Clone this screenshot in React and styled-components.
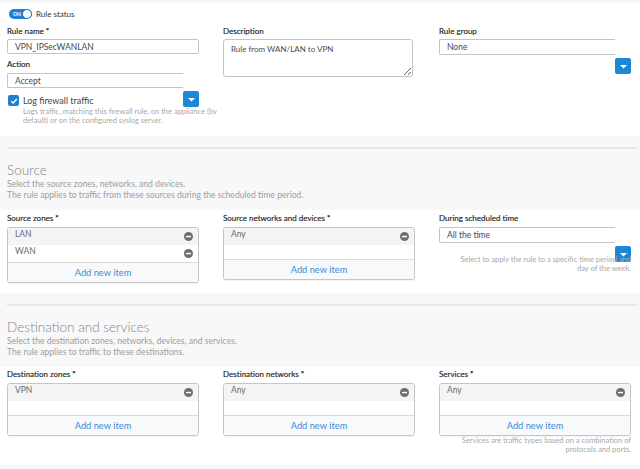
import React from 'react';
import styled, { createGlobalStyle } from 'styled-components';

const GlobalStyle = createGlobalStyle`
  html, body {
    margin: 0;
    padding: 0;
    background: #f7f7f7;
    font-family: Lato, 'Liberation Sans', sans-serif;
    color: #444;
  }
  * { box-sizing: border-box; }
`;

const Page = styled.div`
  width: 640px;
  padding-top: 3px;
`;

const Panel = styled.section`
  background: #fff;
  padding: ${p => p.$pt}px 0 ${p => p.$pb}px;
`;

const SectionHead = styled.header`
  background: #f8f8f8;
  padding: 11px 3px 9px 0;
`;

const Rule = styled.hr`
  margin: 0 0 13px 7px;
  border: 0;
  border-top: 2px solid #e8e8e8;
`;

const Heading = styled.h2`
  margin: 0;
  padding-left: 7px;
  font-size: 13.5px;
  line-height: 17px;
  font-weight: 300;
  color: #858585;
`;

const Intro = styled.p`
  margin: 0;
  padding-left: 7px;
  font-size: 8.6px;
  line-height: 11px;
  color: #9d9d9d;
`;

const StatusRow = styled.div`
  display: flex;
  align-items: center;
  gap: 4px;
  height: 10px;
  padding-left: 9px;
  font-size: 8px;
  color: #333;
`;

const Toggle = styled.span`
  display: flex;
  align-items: center;
  justify-content: space-between;
  width: 23px;
  height: 10px;
  border-radius: 5px;
  background: #1d7fd2;
  padding-left: 4px;
  color: #fff;
  font-size: 5px;
  font-weight: 700;
`;

const Knob = styled.span`
  width: 10px;
  height: 10px;
  border-radius: 50%;
  background: #fff;
  border: 1px solid #1d7fd2;
`;

const FieldGrid = styled.div`
  display: grid;
  grid-template-columns: repeat(3, 192px);
  column-gap: 24px;
  padding-left: 7px;
  margin-top: ${p => p.$mt || 0}px;
`;

const Field = styled.div`
  display: flex;
  flex-direction: column;
`;

const Label = styled.label`
  display: block;
  margin: ${p => p.$mt || 0}px 0 ${p => p.$mb || 3}px;
  font-size: 8px;
  line-height: 10px;
  font-weight: 400;
  color: #1e1e1e;
  -webkit-text-stroke: 0.15px #1e1e1e;
`;

const TextInput = styled.input`
  display: block;
  width: ${p => (p.$select ? 'calc(100% - 16px)' : '100%')};
  height: ${p => p.$h || 15}px;
  margin: 0;
  padding: 0 7px;
  border: 1px solid #c4c4c4;
  border-right: ${p => (p.$select ? 'none' : '1px solid #c4c4c4')};
  border-radius: ${p => (p.$select ? '2px 0 0 2px' : '2px')};
  font-family: inherit;
  font-size: 8.5px;
  color: #4a4a4a;
  background: #fff;
  outline: none;
`;

const TextArea = styled.textarea`
  display: block;
  width: 190px;
  height: 38px;
  margin: 0;
  padding: 4px 7px;
  border: 1px solid #c4c4c4;
  border-radius: 3px;
  font-family: inherit;
  font-size: 8px;
  color: #4a4a4a;
  resize: both;
  outline: none;
`;

const SelectField = styled.div`
  display: block;
`;

const DropButton = styled.button`
  display: flex;
  align-items: center;
  justify-content: center;
  width: 16px;
  height: 16px;
  margin: 3px 0 0 auto;
  padding: 0;
  border: 0;
  border-radius: 2px;
  background: #1c87d4;
`;

const CheckRow = styled.div`
  display: flex;
  align-items: center;
  gap: 4px;
  margin-top: -12px;
  padding-left: 1px;
  font-size: 9px;
  line-height: 11px;
  color: #444;
`;

const CheckBox = styled.span`
  display: flex;
  align-items: center;
  justify-content: center;
  width: 11px;
  height: 11px;
  border-radius: 2px;
  background: #1f80d2;
`;

const Helper = styled.p`
  margin: ${p => p.$mt || 0}px 0 0 ${p => p.$ml || 0}px;
  font-size: 7.5px;
  line-height: 9px;
  color: #a8a8a8;
  text-align: ${p => p.$align || 'left'};
  white-space: nowrap;
`;

const ListBox = styled.div`
  border: 1px solid #c6c6c6;
  border-radius: 3px;
  background: #fff;
  box-shadow: 0 1px 1px rgba(0, 0, 0, 0.06);
  overflow: hidden;
`;

const Items = styled.div`
  min-height: 31px;
`;

const Item = styled.div`
  display: flex;
  justify-content: space-between;
  align-items: center;
  height: 17px;
  padding: 0 5px 0 7px;
  background: ${p => (p.$odd ? '#f4f4f4' : '#fff')};
  font-size: 8.5px;
  color: #6a6a6a;
  span { align-self: flex-start; line-height: 13px; }
`;

const AddItem = styled.div`
  height: 20px;
  border-top: 1px solid #dadada;
  background: #f8f9fa;
  text-align: center;
  line-height: 19px;
  font-size: 9.3px;
  color: #3a8dd8;
`;

const Caret = () => (
  <svg width="7" height="5" viewBox="0 0 7 5">
    <polygon points="0,1 7,1 3.5,4.5" fill="#fff" />
  </svg>
);

const Minus = () => (
  <svg width="9" height="9" viewBox="0 0 9 9">
    <circle cx="4.5" cy="4.5" r="4.5" fill="#6e6e6e" />
    <rect x="2" y="3.8" width="5" height="1.5" fill="#fff" />
  </svg>
);

const Tick = () => (
  <svg width="8" height="8" viewBox="0 0 8 8">
    <polyline points="1.3,4.2 3.2,6 6.8,2" fill="none" stroke="#fff" strokeWidth="1.5" />
  </svg>
);

const ItemList = ({ items }) => (
  <ListBox>
    <Items>
      {items.map((item, i) => (
        <Item key={item} $odd={i % 2 === 0}>
          <span>{item}</span>
          <Minus />
        </Item>
      ))}
    </Items>
    <AddItem>Add new item</AddItem>
  </ListBox>
);

const Select = ({ value, h }) => (
  <SelectField>
    <TextInput $select $h={h} readOnly value={value} />
    <DropButton type="button">
      <Caret />
    </DropButton>
  </SelectField>
);

const App = () => (
  <Page>
    <GlobalStyle />
    <Panel $pt={6} $pb={11}>
      <StatusRow>
        <Toggle>
          ON
          <Knob />
        </Toggle>
        Rule status
      </StatusRow>
      <FieldGrid $mt={7}>
        <Field>
          <Label>Rule name *</Label>
          <TextInput readOnly value="VPN_IPSecWANLAN" />
          <Label $mt={5} $mb={4}>Action</Label>
          <Select value="Accept" />
          <CheckRow>
            <CheckBox>
              <Tick />
            </CheckBox>
            Log firewall traffic
          </CheckRow>
          <Helper $ml={16} $mt={1}>
            Logs traffic, matching this firewall rule, on the appliance (by
            <br />
            default) or on the configured syslog server.
          </Helper>
        </Field>
        <Field>
          <Label>Description</Label>
          <TextArea readOnly defaultValue="Rule from WAN/LAN to VPN" />
        </Field>
        <Field>
          <Label>Rule group</Label>
          <Select value="None" h={16} />
        </Field>
      </FieldGrid>
    </Panel>

    <SectionHead>
      <Rule />
      <Heading>Source</Heading>
      <Intro>Select the source zones, networks, and devices.</Intro>
      <Intro>The rule applies to traffic from these sources during the scheduled time period.</Intro>
    </SectionHead>

    <Panel $pt={3} $pb={10}>
      <FieldGrid>
        <Field>
          <Label $mb={4}>Source zones *</Label>
          <ItemList items={['LAN', 'WAN']} />
        </Field>
        <Field>
          <Label $mb={4}>Source networks and devices *</Label>
          <ItemList items={['Any']} />
        </Field>
        <Field>
          <Label $mb={4}>During scheduled time</Label>
          <Select value="All the time" h={16} />
          <Helper $align="right" $mt={-7}>
            Select to apply the rule to a specific time period and
            <br />
            day of the week.
          </Helper>
        </Field>
      </FieldGrid>
    </Panel>

    <SectionHead>
      <Rule />
      <Heading>Destination and services</Heading>
      <Intro>Select the destination zones, networks, devices, and services.</Intro>
      <Intro>The rule applies to traffic to these destinations.</Intro>
    </SectionHead>

    <Panel $pt={2} $pb={11}>
      <FieldGrid>
        <Field>
          <Label $mb={4}>Destination zones *</Label>
          <ItemList items={['VPN']} />
        </Field>
        <Field>
          <Label $mb={4}>Destination networks *</Label>
          <ItemList items={['Any']} />
        </Field>
        <Field>
          <Label $mb={4}>Services *</Label>
          <ItemList items={['Any']} />
          <Helper $align="right">
            Services are traffic types based on a combination of
            <br />
            protocols and ports.
          </Helper>
        </Field>
      </FieldGrid>
    </Panel>
  </Page>
);

export default App;
